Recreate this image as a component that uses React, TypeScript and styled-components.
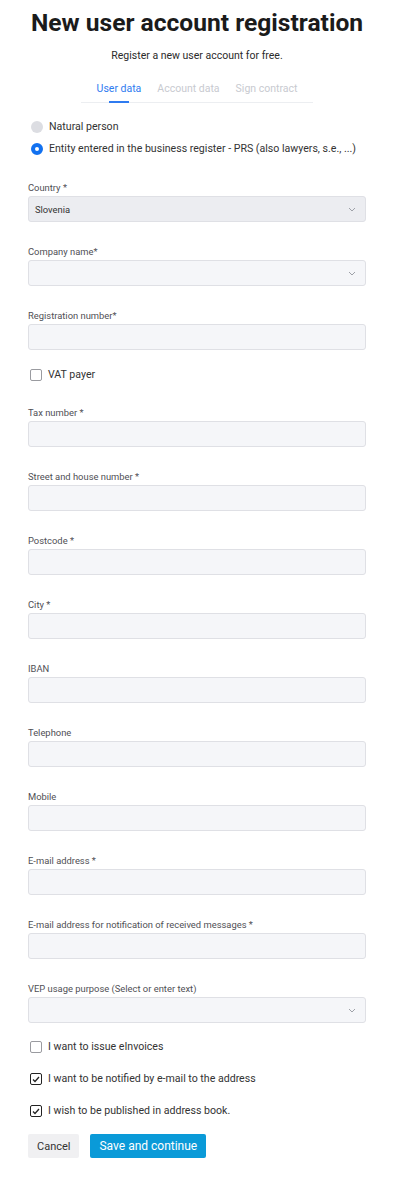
import React from "react";
import styled, {createGlobalStyle} from "styled-components";

const GlobalStyle = createGlobalStyle`
  html, body {
    margin: 0;
    padding: 0;
    background: #ffffff;
  }
  body {
    font-family: Roboto, "Liberation Sans", Arial, sans-serif;
    color: #222;
  }
`;

const Page = styled.div`
  display: flex;
  flex-direction: column;
  padding: 8px 34px 40px 28px;
`;

const Title = styled.h1`
  margin: 0;
  font-size: 24.6px;
  line-height: 30px;
  font-weight: 700;
  text-align: center;
  white-space: nowrap;
  color: #1b1b1b;
`;

const Subtitle = styled.p`
  margin: 11px 0 0;
  font-size: 10.5px;
  line-height: 14px;
  text-align: center;
  color: #2b2b2b;
`;

const TabBar = styled.div`
  display: flex;
  align-self: center;
  gap: 16px;
  margin-top: 14px;
  padding: 0 16px;
  border-bottom: 1px solid #eceef1;
`;

const Tab = styled.div<{ $active?: boolean }>`
  position: relative;
  padding: 5px 0 6px;
  font-size: 10.5px;
  line-height: 14px;
  color: ${(p) => (p.$active ? "#2f7bf0" : "#c8cad0")};
  &::after {
    content: "";
    display: ${(p) => (p.$active ? "block" : "none")};
    position: absolute;
    left: 50%;
    bottom: -1px;
    width: 20px;
    height: 2px;
    margin-left: -10px;
    background: #2f7bf0;
  }
`;

const RadioList = styled.div`
  display: flex;
  flex-direction: column;
  gap: 8px;
  margin-top: 17px;
  padding-left: 3px;
`;

const OptionRow = styled.label`
  display: flex;
  align-items: center;
  gap: 6px;
  font-size: 10.6px;
  line-height: 14px;
  white-space: nowrap;
  color: #333;
`;

const RadioDot = styled.span<{ $checked?: boolean }>`
  box-sizing: border-box;
  width: 12px;
  height: 12px;
  border-radius: 50%;
  flex-shrink: 0;
  background: ${(p) => (p.$checked ? "#ffffff" : "#dcdde2")};
  border: ${(p) => (p.$checked ? "4px solid #1271f0" : "none")};
`;

const Form = styled.div`
  display: flex;
  flex-direction: column;
  margin-top: 26px;
`;

const Field = styled.div`
  display: flex;
  flex-direction: column;
  gap: 2px;
  margin-bottom: 24px;
`;

const Label = styled.div`
  font-size: 9.4px;
  line-height: 12px;
  color: #4f4f55;
`;

const InputBox = styled.div<{ $disabled?: boolean }>`
  box-sizing: border-box;
  display: flex;
  align-items: center;
  justify-content: space-between;
  height: 26px;
  padding: 0 9px 0 6px;
  border: 1px solid #dfe0e5;
  border-radius: 3px;
  background: ${(p) => (p.$disabled ? "#ecedf1" : "#f5f6f9")};
  font-size: 9.4px;
  color: #333;
`;

const CheckRow = styled(OptionRow)`
  padding-left: 2px;
`;

const CheckBox = styled.span<{ $checked?: boolean }>`
  box-sizing: border-box;
  display: flex;
  align-items: center;
  justify-content: center;
  width: 12px;
  height: 12px;
  flex-shrink: 0;
  border-radius: 2px;
  border: 1px solid ${(p) => (p.$checked ? "#222" : "#9a9ba0")};
  background: #fff;
`;

const VatRow = styled(CheckRow)`
  margin: -6px 0 25px;
`;

const CheckList = styled.div`
  display: flex;
  flex-direction: column;
  gap: 18px;
  margin-top: -7px;
`;

const Buttons = styled.div`
  display: flex;
  gap: 11px;
  margin-top: 16px;
`;

const Button = styled.button<{ $primary?: boolean }>`
  height: 24px;
  padding: 0 9px;
  border: none;
  border-radius: 2px;
  font-family: Roboto, "Liberation Sans", Arial, sans-serif;
  font-size: ${(p) => (p.$primary ? "12px" : "11px")};
  color: ${(p) => (p.$primary ? "#fff" : "#333")};
  background: ${(p) => (p.$primary ? "#0a9ad8" : "#f0f0f2")};
`;

const Chevron = () => (
    <svg width="8" height="5" viewBox="0 0 8 5" fill="none">
        <path d="M1 1l3 3 3-3" stroke="#9ea1a8" strokeWidth="1" />
    </svg>
);

const Tick = () => (
    <svg width="8" height="7" viewBox="0 0 8 7" fill="none">
        <path d="M1 3.5l2 2L7 1" stroke="#222" strokeWidth="1.3" />
    </svg>
);

interface FieldProps {
    label: string;
    value?: string;
    select?: boolean;
    disabled?: boolean;
}

const FormField = ({label, value, select, disabled}: FieldProps) => (
    <Field>
        <Label>{label}</Label>
        <InputBox $disabled={disabled}>
            <span>{value}</span>
            {select && <Chevron />}
        </InputBox>
    </Field>
);

const Check = ({label, checked}: { label: string; checked?: boolean }) => (
    <CheckRow>
        <CheckBox $checked={checked}>{checked && <Tick />}</CheckBox>
        {label}
    </CheckRow>
);

const restFields = [
    "Tax number *",
    "Street and house number *",
    "Postcode *",
    "City *",
    "IBAN",
    "Telephone",
    "Mobile",
    "E-mail address *",
    "E-mail address for notification of received messages *",
];

export default function App() {
    return (
        <>
            <GlobalStyle />
            <Page>
                <Title>New user account registration</Title>
                <Subtitle>Register a new user account for free.</Subtitle>
                <TabBar>
                    <Tab $active>User data</Tab>
                    <Tab>Account data</Tab>
                    <Tab>Sign contract</Tab>
                </TabBar>
                <RadioList>
                    <OptionRow>
                        <RadioDot />
                        Natural person
                    </OptionRow>
                    <OptionRow>
                        <RadioDot $checked />
                        Entity entered in the business register - PRS (also lawyers, s.e., ...)
                    </OptionRow>
                </RadioList>
                <Form>
                    <FormField label="Country *" value="Slovenia" select disabled />
                    <FormField label="Company name*" select />
                    <FormField label="Registration number*" />
                    <VatRow>
                        <CheckBox />
                        VAT payer
                    </VatRow>
                    {restFields.map((f) => (
                        <FormField key={f} label={f} />
                    ))}
                    <FormField label="VEP usage purpose (Select or enter text)" select />
                    <CheckList>
                        <Check label="I want to issue eInvoices" />
                        <Check label="I want to be notified by e-mail to the address" checked />
                        <Check label="I wish to be published in address book." checked />
                    </CheckList>
                    <Buttons>
                        <Button>Cancel</Button>
                        <Button $primary>Save and continue</Button>
                    </Buttons>
                </Form>
            </Page>
        </>
    );
}
